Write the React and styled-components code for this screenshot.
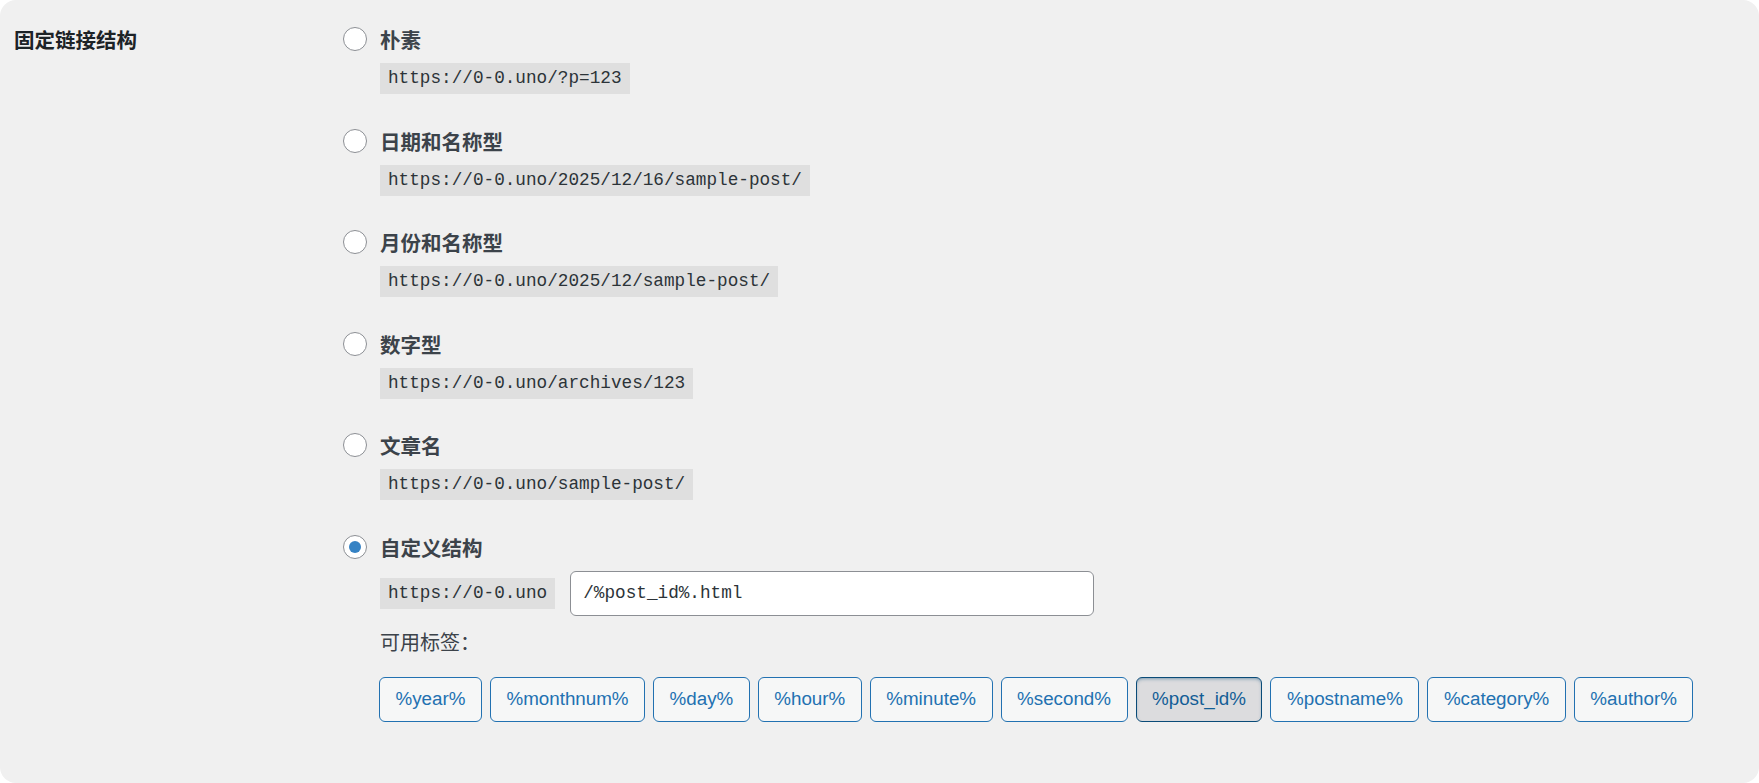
import React from 'react';
import styled, { createGlobalStyle } from 'styled-components';

const GlobalStyle = createGlobalStyle`
  html, body {
    margin: 0;
    padding: 0;
    background: #ffffff;
  }
  body {
    font-family: "Liberation Sans", "Noto Sans CJK SC", sans-serif;
  }
`;

const Panel = styled.section`
  box-sizing: border-box;
  min-height: 100vh;
  background: #f0f0f0;
  border-radius: 16px;
  display: grid;
  grid-template-columns: 329px 1fr;
  padding: 24px 0 0 14px;
`;

const Heading = styled.div`
  height: 30px;
  line-height: 30px;
  font-family: "Noto Sans CJK SC", sans-serif;
  font-size: 20.5px;
  font-weight: 700;
  color: #1d2327;
`;

const Options = styled.div`
  display: flex;
  flex-direction: column;
`;

const Option = styled.div`
  display: flex;
  flex-direction: column;
  align-items: flex-start;
  margin-bottom: 31.5px;
`;

const OptionLine = styled.label`
  display: flex;
  align-items: center;
  gap: 13px;
  height: 30px;
  font-family: "Noto Sans CJK SC", sans-serif;
  font-size: 20.5px;
  font-weight: 700;
  color: #3c434a;
`;

const Radio = styled.span`
  box-sizing: border-box;
  width: 24px;
  height: 24px;
  border-radius: 50%;
  border: 1px solid #8c8f94;
  background: #ffffff;
  display: grid;
  place-items: center;

  &::after {
    content: '';
    width: 12px;
    height: 12px;
    border-radius: 50%;
    background: ${p => (p.$checked ? '#3582c4' : 'transparent')};
  }
`;

const Code = styled.code`
  display: inline-block;
  height: 31px;
  line-height: 31px;
  padding: 0 8px;
  background: #dfdfdf;
  font-family: "Liberation Mono", monospace;
  font-size: 17.7px;
  color: #2c3338;
  white-space: nowrap;
`;

const Indented = styled.div`
  margin-left: 37px;
  margin-top: ${p => p.$top || 9}px;
`;

const CustomRow = styled(Indented)`
  display: flex;
  align-items: center;
  gap: 15px;
`;

const TextInput = styled.input`
  box-sizing: border-box;
  width: 524px;
  height: 45px;
  padding: 0 12px;
  border: 1px solid #8c8f94;
  border-radius: 6px;
  background: #ffffff;
  font-family: "Liberation Mono", monospace;
  font-size: 17.7px;
  color: #2c3338;
  outline: none;
`;

const TagsLabel = styled(Indented)`
  height: 30px;
  line-height: 30px;
  font-family: "Noto Sans CJK SC", sans-serif;
  font-size: 20px;
  color: #3c434a;
`;

const Tags = styled(Indented)`
  margin-left: 36px;
  display: flex;
  flex-wrap: wrap;
  gap: 8px;
`;

const TagButton = styled.button`
  box-sizing: border-box;
  height: 45px;
  padding: 0 15.5px;
  border-radius: 6px;
  border: 1px solid ${p => (p.$active ? '#0a4b78' : '#2271b1')};
  background: ${p => (p.$active ? '#dcdcde' : '#f6f7f7')};
  box-shadow: ${p => (p.$active ? 'inset 0 2px 5px -3px #0a4b78' : 'none')};
  color: ${p => (p.$active ? '#135e96' : '#2271b1')};
  font-family: "Liberation Sans", sans-serif;
  font-size: 18.8px;
  cursor: pointer;
`;

const presets = [
  { label: '朴素', url: 'https://0-0.uno/?p=123' },
  { label: '日期和名称型', url: 'https://0-0.uno/2025/12/16/sample-post/' },
  { label: '月份和名称型', url: 'https://0-0.uno/2025/12/sample-post/' },
  { label: '数字型', url: 'https://0-0.uno/archives/123' },
  { label: '文章名', url: 'https://0-0.uno/sample-post/' },
];

const tags = [
  '%year%', '%monthnum%', '%day%', '%hour%', '%minute%',
  '%second%', '%post_id%', '%postname%', '%category%', '%author%',
];

export default function App() {
  return (
    <>
      <GlobalStyle />
      <Panel>
        <Heading>固定链接结构</Heading>
        <Options>
          {presets.map(p => (
            <Option key={p.label}>
              <OptionLine>
                <Radio />
                {p.label}
              </OptionLine>
              <Indented>
                <Code>{p.url}</Code>
              </Indented>
            </Option>
          ))}
          <Option>
            <OptionLine>
              <Radio $checked />
              自定义结构
            </OptionLine>
            <CustomRow>
              <Code>https://0-0.uno</Code>
              <TextInput defaultValue="/%post_id%.html" />
            </CustomRow>
            <TagsLabel $top={11}>可用标签：</TagsLabel>
            <Tags $top={20}>
              {tags.map(t => (
                <TagButton key={t} $active={t === '%post_id%'}>{t}</TagButton>
              ))}
            </Tags>
          </Option>
        </Options>
      </Panel>
    </>
  );
}
